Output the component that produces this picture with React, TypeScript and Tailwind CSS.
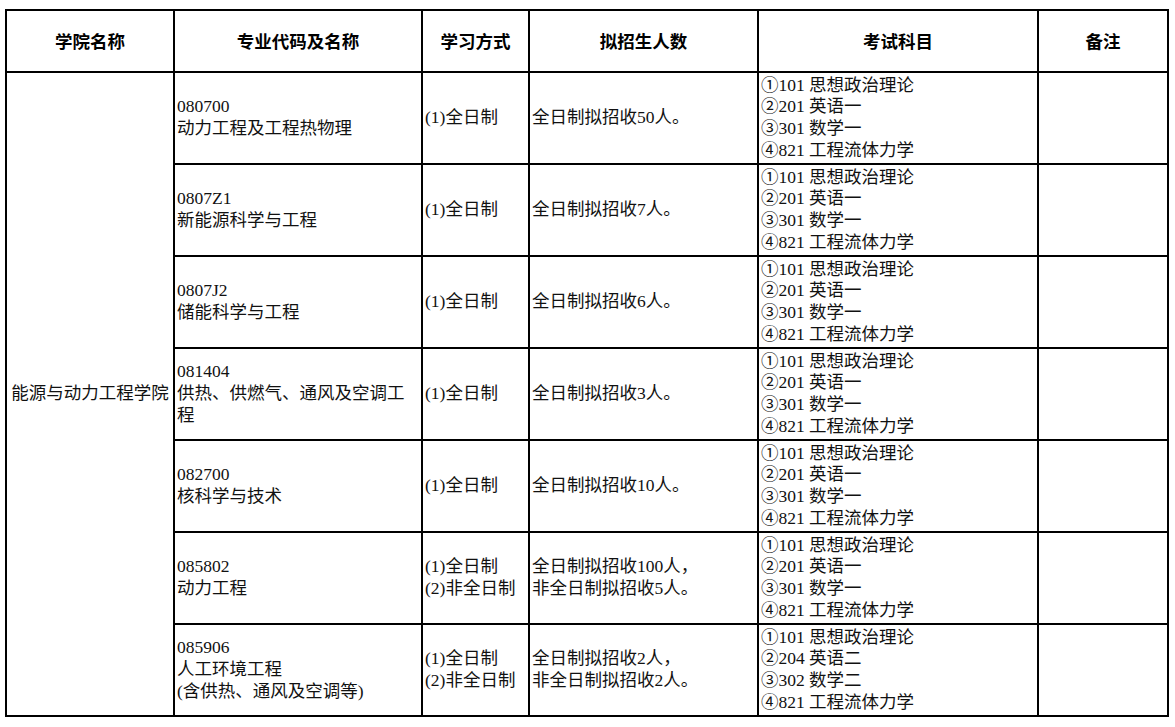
import React from 'react';

type Row = {
  code: string;
  name: React.ReactNode;
  modes: string[];
  quota: string[];
  exams: string[];
};

const examsA = ['①101 思想政治理论', '②201 英语一', '③301 数学一', '④821 工程流体力学'];
const examsB = ['①101 思想政治理论', '②204 英语二', '③302 数学二', '④821 工程流体力学'];

const rows: Row[] = [
  { code: '080700', name: '动力工程及工程热物理', modes: ['(1)全日制'], quota: ['全日制拟招收50人。'], exams: examsA },
  { code: '0807Z1', name: '新能源科学与工程', modes: ['(1)全日制'], quota: ['全日制拟招收7人。'], exams: examsA },
  { code: '0807J2', name: '储能科学与工程', modes: ['(1)全日制'], quota: ['全日制拟招收6人。'], exams: examsA },
  {
    code: '081404',
    name: (
      <>
        供热、供燃气、通风及空调工
        <br />程
      </>
    ),
    modes: ['(1)全日制'],
    quota: ['全日制拟招收3人。'],
    exams: examsA,
  },
  { code: '082700', name: '核科学与技术', modes: ['(1)全日制'], quota: ['全日制拟招收10人。'], exams: examsA },
  {
    code: '085802',
    name: '动力工程',
    modes: ['(1)全日制', '(2)非全日制'],
    quota: ['全日制拟招收100人，', '非全日制拟招收5人。'],
    exams: examsA,
  },
  {
    code: '085906',
    name: (
      <>
        人工环境工程
        <br />
        (含供热、通风及空调等)
      </>
    ),
    modes: ['(1)全日制', '(2)非全日制'],
    quota: ['全日制拟招收2人，', '非全日制拟招收2人。'],
    exams: examsB,
  },
];

const headers = ['学院名称', '专业代码及名称', '学习方式', '拟招生人数', '考试科目', '备注'];

const cell = 'border-2 border-black align-middle p-0 pl-[2px] text-left';

export default function App() {
  return (
    <div className="bg-white w-[1175px] h-[727px] pt-[9px] pl-[5px]">
      <table
        className="table-fixed border-collapse w-[1164px] text-[17.5px] leading-[21.7px] text-[#111]"
        style={{ fontFamily: '"Liberation Serif", "Noto Sans CJK SC", serif' }}
      >
        <colgroup>
          <col className="w-[168px]" />
          <col className="w-[248px]" />
          <col className="w-[107px]" />
          <col className="w-[229px]" />
          <col className="w-[280px]" />
          <col className="w-[130px]" />
        </colgroup>
        <thead>
          <tr className="h-[62px]">
            {headers.map((h) => (
              <th
                key={h}
                className="border-2 border-black p-0 text-center align-middle font-bold text-black"
                style={{ fontFamily: '"Noto Sans CJK SC", sans-serif' }}
              >
                {h}
              </th>
            ))}
          </tr>
        </thead>
        <tbody>
          {rows.map((r, i) => (
            <tr key={r.code} className="h-[92px]">
              {i === 0 && (
                <td rowSpan={rows.length} className="border-2 border-black p-0 text-center align-middle">
                  能源与动力工程学院
                </td>
              )}
              <td className={cell}>
                {r.code}
                <br />
                {r.name}
              </td>
              <td className={cell}>
                {r.modes.map((m) => (
                  <div key={m}>{m}</div>
                ))}
              </td>
              <td className={cell}>
                {r.quota.map((q) => (
                  <div key={q}>{q}</div>
                ))}
              </td>
              <td className={cell}>
                {r.exams.map((e) => (
                  <div key={e} className="whitespace-pre">
                    {e}
                  </div>
                ))}
              </td>
              <td className={cell}></td>
            </tr>
          ))}
        </tbody>
      </table>
    </div>
  );
}
